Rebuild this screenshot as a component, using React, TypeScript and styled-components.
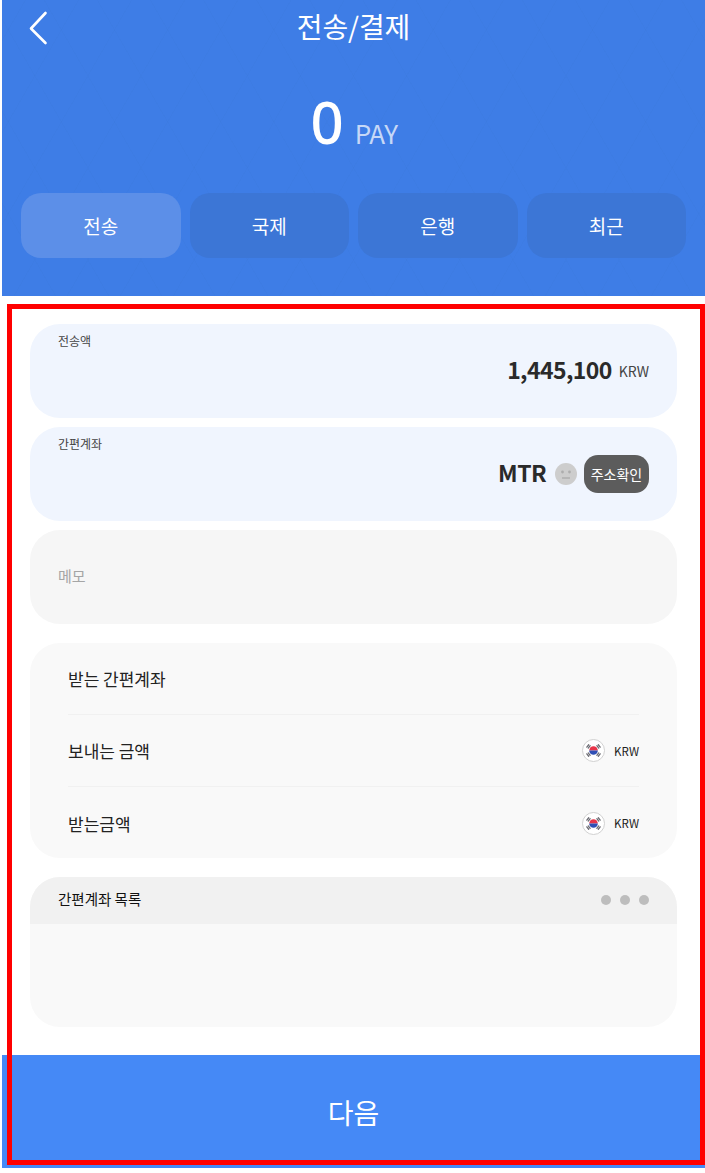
import React from 'react';
import styled, { createGlobalStyle } from 'styled-components';

const GlobalStyle = createGlobalStyle`
  html, body {
    margin: 0;
    padding: 0;
    background: #fff;
    font-family: "Noto Sans CJK KR", "Noto Sans", sans-serif;
  }
`;

const Page = styled.div`
  position: relative;
  width: 705px;
  height: 1173px;
  padding-left: 2px;
  box-sizing: border-box;
  overflow: hidden;
  background: #fff;
`;

const Header = styled.header`
  height: 296px;
  background-color: #3e7de6;
  background-image:
    repeating-linear-gradient(60deg, rgba(0, 0, 0, 0.012) 0 1px, transparent 1px 46px),
    repeating-linear-gradient(-60deg, rgba(0, 0, 0, 0.012) 0 1px, transparent 1px 46px);
  color: #fff;
  display: flex;
  flex-direction: column;
  align-items: center;
`;

const TitleBar = styled.div`
  position: relative;
  width: 100%;
  height: 52px;
  display: flex;
  justify-content: center;
  align-items: center;
`;

const BackIcon = styled.svg`
  position: absolute;
  left: 26px;
  top: 11px;
  width: 22px;
  height: 34px;
  fill: none;
  stroke: #fff;
  stroke-width: 2.6;
  stroke-linecap: round;
  stroke-linejoin: round;
`;

const Title = styled.h1`
  margin: 0;
  font-size: 28px;
  font-weight: 400;
  line-height: 52px;
  letter-spacing: -0.1px;
`;

const Balance = styled.div`
  margin-top: 32px;
  height: 73px;
  padding-left: 1px;
  display: flex;
  align-items: baseline;
  gap: 11px;
`;

const BalanceValue = styled.span`
  font-family: "Noto Sans", sans-serif;
  font-size: 58px;
  font-weight: 500;
  line-height: 75px;
`;

const BalanceUnit = styled.span`
  font-size: 26px;
  color: #c6d8f7;
  letter-spacing: -0.5px;
`;

const Tabs = styled.nav`
  margin-top: 36px;
  align-self: stretch;
  padding: 0 19px;
  display: grid;
  grid-template-columns: repeat(4, 1fr);
  gap: 9px;
`;

const Tab = styled.button<{ $active?: boolean }>`
  height: 65px;
  border: 0;
  border-radius: 20px;
  padding: 0;
  font: inherit;
  font-size: 19px;
  color: #fff;
  background: ${(p) => (p.$active ? '#5c8fe8' : '#3c76d6')};
`;

const Content = styled.main`
  padding: 28px;
  display: flex;
  flex-direction: column;
`;

const Field = styled.section<{ $muted?: boolean }>`
  position: relative;
  height: 94px;
  margin-bottom: 9px;
  border-radius: 30px;
  background: ${(p) => (p.$muted ? '#f6f6f6' : '#f0f5fe')};
  padding: 0 28px;
  box-sizing: border-box;
  display: flex;
  flex-direction: column;
`;

const FieldLabel = styled.label`
  font-size: 12px;
  line-height: 18px;
  margin-top: 8px;
  color: #444;
`;

const FieldValue = styled.div`
  margin-top: -3px;
  display: flex;
  justify-content: flex-end;
  align-items: center;
  height: 48px;
`;

const Amount = styled.strong`
  font-size: 23px;
  font-weight: 700;
  color: #2a2a2a;
  letter-spacing: -0.6px;
  padding-bottom: 5px;
`;

const Currency = styled.span`
  margin-left: 7px;
  font-size: 14px;
  color: #444;
`;

const CoinIcon = styled.svg`
  margin-left: 9px;
  width: 22px;
  height: 22px;
`;

const ConfirmButton = styled.button`
  margin-left: 7px;
  width: 65px;
  height: 38px;
  border: 0;
  border-radius: 14px;
  padding: 0;
  background: #5c5c5c;
  color: #fff;
  font: inherit;
  font-size: 14px;
`;

const MemoPlaceholder = styled.div`
  line-height: 92px;
  font-size: 15px;
  color: #a5a5a5;
`;

const Summary = styled.section`
  margin-top: 10px;
  height: 215px;
  padding: 0 38px;
  box-sizing: border-box;
  border-radius: 30px;
  background: #f9f9f9;
`;

const SummaryRow = styled.div`
  height: 72px;
  display: flex;
  align-items: center;
  justify-content: space-between;
  font-size: 17px;
  color: #222;
  border-bottom: 1px solid #f1f1f1;
  box-sizing: border-box;
  &:last-child {
    border-bottom: 0;
  }
`;

const CurrencyTag = styled.span`
  display: flex;
  align-items: center;
  gap: 9px;
  font-size: 11.5px;
  font-weight: 400;
  color: #222;
`;

const FlagIcon = styled.svg`
  width: 23px;
  height: 23px;
`;

const AccountList = styled.section`
  margin-top: 19px;
  height: 150px;
  border-radius: 30px;
  overflow: hidden;
  background: #f9f9f9;
`;

const AccountListHeader = styled.div`
  height: 47px;
  padding: 0 28px;
  background: #f1f1f1;
  display: flex;
  align-items: center;
  justify-content: space-between;
  font-size: 14.5px;
  color: #111;
`;

const AccountListTitle = styled.span`
  padding-bottom: 5px;
`;

const Dots = styled.div`
  display: flex;
  gap: 9px;
  padding-bottom: 1px;
`;

const Dot = styled.span`
  width: 10px;
  height: 10px;
  border-radius: 50%;
  background: #bdbdbd;
`;

const NextButton = styled.button`
  display: block;
  width: 100%;
  height: 113px;
  border: 0;
  padding: 0;
  background: #4589f6;
  color: #fff;
  font: inherit;
  font-size: 28px;
`;

const Highlight = styled.div`
  position: absolute;
  left: 7px;
  top: 304px;
  width: 698px;
  height: 861px;
  box-sizing: border-box;
  border: 5px solid #ff0000;
  pointer-events: none;
`;

const Flag = () => (
  <FlagIcon viewBox="0 0 24 24">
    <circle cx="12" cy="12" r="11.5" fill="#fff" stroke="#cfcfcf" />
    <path d="M7.5 12a4.5 4.5 0 0 1 9 0z" fill="#e8354a" />
    <path d="M7.5 12a4.5 4.5 0 0 0 9 0z" fill="#2f4fb5" />
    <g stroke="#6a6a72" strokeWidth="1.3" strokeLinecap="round">
      <path d="M5 8.5l2-2.5M6.5 9.5l2-2.5" />
      <path d="M19 8.5l-2-2.5M17.5 9.5l-2-2.5" />
      <path d="M5 15.5l2 2.5M6.5 14.5l2 2.5" />
      <path d="M19 15.5l-2 2.5M17.5 14.5l-2 2.5" />
    </g>
  </FlagIcon>
);

const App: React.FC = () => (
  <>
    <GlobalStyle />
    <Page>
      <Header>
        <TitleBar>
          <BackIcon viewBox="0 0 22 34">
            <path d="M17.5 2L3 17.5 17.5 32" />
          </BackIcon>
          <Title>전송/결제</Title>
        </TitleBar>
        <Balance>
          <BalanceValue>0</BalanceValue>
          <BalanceUnit>PAY</BalanceUnit>
        </Balance>
        <Tabs>
          <Tab $active>전송</Tab>
          <Tab>국제</Tab>
          <Tab>은행</Tab>
          <Tab>최근</Tab>
        </Tabs>
      </Header>
      <Content>
        <Field>
          <FieldLabel>전송액</FieldLabel>
          <FieldValue>
            <Amount>1,445,100</Amount>
            <Currency>KRW</Currency>
          </FieldValue>
        </Field>
        <Field>
          <FieldLabel>간편계좌</FieldLabel>
          <FieldValue>
            <Amount>MTR</Amount>
            <CoinIcon viewBox="0 0 22 22">
              <circle cx="11" cy="11" r="11" fill="#cdcdcd" />
              <circle cx="7.5" cy="9" r="1.4" fill="#adadad" />
              <circle cx="14.5" cy="9" r="1.4" fill="#adadad" />
              <path d="M7 15h8" stroke="#adadad" strokeWidth="1.4" />
            </CoinIcon>
            <ConfirmButton>주소확인</ConfirmButton>
          </FieldValue>
        </Field>
        <Field $muted>
          <MemoPlaceholder>메모</MemoPlaceholder>
        </Field>
        <Summary>
          <SummaryRow>받는 간편계좌</SummaryRow>
          <SummaryRow>
            보내는 금액
            <CurrencyTag>
              <Flag />
              KRW
            </CurrencyTag>
          </SummaryRow>
          <SummaryRow>
            받는금액
            <CurrencyTag>
              <Flag />
              KRW
            </CurrencyTag>
          </SummaryRow>
        </Summary>
        <AccountList>
          <AccountListHeader>
            <AccountListTitle>간편계좌 목록</AccountListTitle>
            <Dots>
              <Dot />
              <Dot />
              <Dot />
            </Dots>
          </AccountListHeader>
        </AccountList>
      </Content>
      <NextButton>다음</NextButton>
      <Highlight />
    </Page>
  </>
);

export default App;
